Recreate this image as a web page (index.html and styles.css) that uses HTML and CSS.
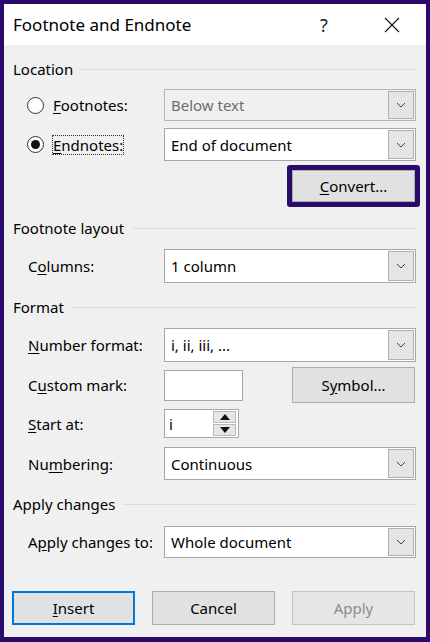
FILE: index.html
```html
<!DOCTYPE html>
<html lang="en">
<head>
  <meta charset="UTF-8" />
  <title>Footnote and Endnote</title>
  <link rel="stylesheet" href="styles.css">
</head>
<body>
  <div class="dialog">
    <div class="title-bar">
      <div class="title">Footnote and Endnote</div>
      <div class="title-help">?</div>
      <div class="title-close">
        <svg width="16" height="16" viewBox="0 0 16 16"><path d="M1 1 L15 15 M15 1 L1 15" stroke="#111" stroke-width="1.1" fill="none"/></svg>
      </div>
    </div>

    <div class="content">
      <div class="group-head g-location"><span>Location</span><div class="rule"></div></div>

      <div class="row r-foot">
        <div class="label radio-label"><span class="radio"></span><span><u>F</u>ootnotes:</span></div>
        <div class="select disabled"><span class="value">Below text</span><span class="drop"><svg width="10" height="6" viewBox="0 0 10 6"><path d="M1 1 L5 5 L9 1" stroke="#444" fill="none"/></svg></span></div>
      </div>

      <div class="row r-end">
        <div class="label radio-label"><span class="radio checked"></span><span class="focus"><u>E</u>ndnotes:</span></div>
        <div class="select"><span class="value">End of document</span><span class="drop"><svg width="10" height="6" viewBox="0 0 10 6"><path d="M1 1 L5 5 L9 1" stroke="#444" fill="none"/></svg></span></div>
      </div>

      <div class="row r-convert">
        <div class="highlight"><div class="btn"><u>C</u>onvert...</div></div>
      </div>

      <div class="group-head g-layout"><span>Footnote layout</span><div class="rule"></div></div>

      <div class="row r-columns">
        <div class="label">C<u>o</u>lumns:</div>
        <div class="select"><span class="value">1 column</span><span class="drop"><svg width="10" height="6" viewBox="0 0 10 6"><path d="M1 1 L5 5 L9 1" stroke="#444" fill="none"/></svg></span></div>
      </div>

      <div class="group-head g-format"><span>Format</span><div class="rule"></div></div>

      <div class="row r-number">
        <div class="label"><u>N</u>umber format:</div>
        <div class="select"><span class="value">i, ii, iii, ...</span><span class="drop"><svg width="10" height="6" viewBox="0 0 10 6"><path d="M1 1 L5 5 L9 1" stroke="#444" fill="none"/></svg></span></div>
      </div>

      <div class="row r-custom">
        <div class="label">C<u>u</u>stom mark:</div>
        <div class="textbox"></div>
        <div class="btn symbol">S<u>y</u>mbol...</div>
      </div>

      <div class="row r-start">
        <div class="label"><u>S</u>tart at:</div>
        <div class="spinner">
          <span class="value">i</span>
          <div class="spin">
            <span class="spin-btn"><svg width="10" height="6" viewBox="0 0 10 6"><path d="M0 6 L5 0 L10 6 Z" fill="#111"/></svg></span>
            <span class="spin-btn"><svg width="10" height="6" viewBox="0 0 10 6"><path d="M0 0 L10 0 L5 6 Z" fill="#111"/></svg></span>
          </div>
        </div>
      </div>

      <div class="row r-numbering">
        <div class="label">Nu<u>m</u>bering:</div>
        <div class="select"><span class="value">Continuous</span><span class="drop"><svg width="10" height="6" viewBox="0 0 10 6"><path d="M1 1 L5 5 L9 1" stroke="#444" fill="none"/></svg></span></div>
      </div>

      <div class="group-head g-apply"><span>Apply changes</span><div class="rule"></div></div>

      <div class="row r-applyto">
        <div class="label">A<u>p</u>ply changes to:</div>
        <div class="select"><span class="value">Whole document</span><span class="drop"><svg width="10" height="6" viewBox="0 0 10 6"><path d="M1 1 L5 5 L9 1" stroke="#444" fill="none"/></svg></span></div>
      </div>

      <div class="buttons">
        <div class="btn default"><u>I</u>nsert</div>
        <div class="btn">Cancel</div>
        <div class="btn disabled-btn">Apply</div>
      </div>
    </div>
  </div>
</body>
</html>
```

FILE: styles.css
```css
* {
  box-sizing: border-box;
  margin: 0;
  padding: 0;
}

body {
  font-family: 'Noto Sans', 'Open Sans', sans-serif;
  font-size: 15px;
  color: #000;
  background: #2a0b6b;
  width: 430px;
  height: 642px;
  overflow: hidden;
}

.dialog {
  width: 430px;
  height: 642px;
  border: 4px solid #2a0b6b;
  border-bottom-width: 5px;
  background: #f0f0f0;
  display: flex;
  flex-direction: column;
}

.title-bar {
  height: 41px;
  background: #fff;
  display: flex;
  align-items: center;
  padding-left: 9px;
  flex-shrink: 0;
}

.title {
  font-size: 17px;
  flex: 1;
}

.title-help {
  font-size: 18px;
  width: 30px;
  margin-right: 34px;
  color: #222;
}

.title-close {
  width: 42px;
  display: flex;
  align-items: center;
}

.content {
  padding: 0 10px 0 8px;
  display: flex;
  flex-direction: column;
}

u {
  text-decoration: underline;
  text-underline-offset: 2px;
}

.group-head {
  height: 20px;
  display: flex;
  align-items: center;
  gap: 8px;
  margin-top: 14px;
  padding-left: 1px;
}

.group-head .rule {
  flex: 1;
  height: 1px;
  background: #dcdcdc;
}

.g-layout { margin-top: 11px; }

.row {
  display: flex;
  align-items: center;
}

.label {
  width: 152px;
  padding-left: 16px;
  flex-shrink: 0;
}

.radio-label {
  display: flex;
  align-items: center;
  gap: 9px;
  padding-left: 15px;
}

.radio {
  width: 17px;
  height: 17px;
  border: 1px solid #333;
  border-radius: 50%;
  background: #fff;
  display: flex;
  align-items: center;
  justify-content: center;
}

.radio.checked::after {
  content: '';
  width: 9px;
  height: 9px;
  border-radius: 50%;
  background: #111;
}

.focus {
  outline: 1px dotted #333;
  line-height: 18px;
}

.select {
  flex: 1;
  height: 33px;
  border: 1px solid #a6a6a6;
  background: #fff;
  display: flex;
  align-items: center;
  padding: 1px;
}

.select .value {
  flex: 1;
  padding-left: 5px;
}

.select.disabled {
  background: #f0f0f0;
  color: #6d6d6d;
  border-color: #b5b5b5;
}

.drop {
  width: 26px;
  height: 100%;
  background: #e5e5e5;
  border: 1px solid #b0b0b0;
  display: flex;
  align-items: center;
  justify-content: center;
}

.r-foot { margin-top: 10px; height: 32px; }
.r-foot .select { height: 32px; }
.r-end { margin-top: 7px; }

.r-convert {
  margin-top: 4px;
  justify-content: flex-end;
  margin-right: -4px;
}

.highlight {
  border: 5px solid #2a0b6b;
  border-radius: 3px;
  background: #f3eefc;
}

.btn {
  height: 34px;
  width: 123px;
  background: #e1e1e1;
  border: 1px solid #adadad;
  display: flex;
  align-items: center;
  justify-content: center;
}

.highlight .btn {
  height: 32px;
}

.r-columns { margin-top: 11px; }
.r-columns .select { height: 34px; }

.r-number { margin-top: 11px; }
.r-number .select { height: 34px; }

.r-custom {
  margin-top: 5px;
  height: 36px;
}

.textbox {
  width: 79px;
  height: 31px;
  border: 1px solid #a6a6a6;
  background: #fff;
}

.symbol {
  height: 36px;
  margin-left: auto;
  margin-right: 1px;
}

.r-start {
  margin-top: 6px;
  height: 29px;
}

.spinner {
  width: 75px;
  height: 29px;
  border: 1px solid #a6a6a6;
  background: #fff;
  display: flex;
  align-items: center;
  padding: 1px 2px 1px 0;
}

.spinner .value {
  flex: 1;
  padding-left: 4px;
}

.spin {
  display: flex;
  flex-direction: column;
  gap: 1px;
  width: 23px;
  height: 100%;
}

.spin-btn {
  flex: 1;
  background: #e6e6e6;
  border: 1px solid #b8b8b8;
  display: flex;
  align-items: center;
  justify-content: center;
}

.r-numbering { margin-top: 9px; }

.r-applyto { margin-top: 12px; }
.r-applyto .select { height: 32px; }

.buttons {
  margin-top: 33px;
  display: flex;
  justify-content: space-between;
  padding-right: 1px;
}

.buttons .btn {
  height: 34px;
}

.btn.default {
  border: 2px solid #0078d7;
}

.btn.disabled-btn {
  color: #8c8c8c;
  background: #e6e6e6;
  border-color: #c4c4c4;
}
```
